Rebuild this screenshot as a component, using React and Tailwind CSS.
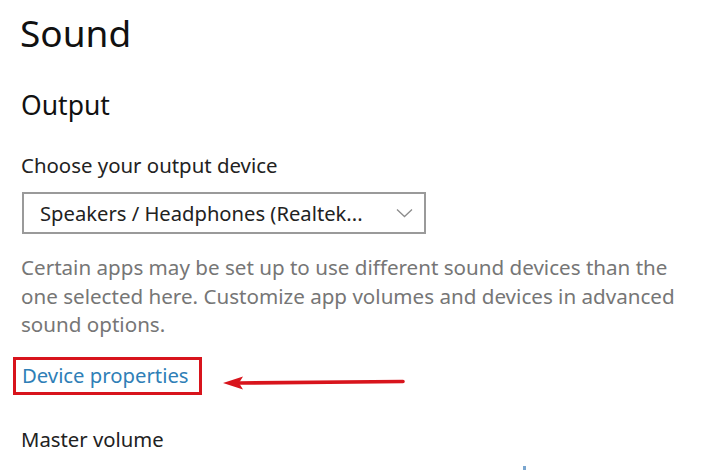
export default function App() {
  return (
    <div className="relative h-[472px] w-[720px] overflow-hidden bg-white pl-[21px] font-['Noto_Sans','Open_Sans',sans-serif] text-[#111]">
      <h1 className="-ml-[1px] pt-[8px] text-[37px] leading-[50px] font-normal">Sound</h1>
      <h2 className="mt-[29px] text-[26.5px] leading-[36px] font-normal">Output</h2>

      <div className="mt-[28px] text-[20.4px] leading-[28px] text-[#222]">Choose your output device</div>

      <button className="mt-[13px] ml-px flex h-[42px] w-[404px] items-center justify-between border-2 border-[#9a9a9a] pr-[11px] pl-[16px] text-[20.2px] leading-[28px] text-[#222]">
        <span>Speakers / Headphones (Realtek...</span>
        <svg width="17" height="10" viewBox="0 0 17 10" fill="none" stroke="#8c8c8c" strokeWidth="1.3">
          <path d="M1 1.5 L8.5 8.5 L16 1.5" />
        </svg>
      </button>

      <p className="mt-[19px] w-[672px] text-[20.6px] leading-[28.5px] text-[#767676]">
        Certain apps may be set up to use different sound devices than the one selected here.
        Customize app volumes and devices in advanced sound options.
      </p>

      <div className="mt-[18px] flex items-start">
        <div className="-ml-[8px] h-[38px] border-[3px] border-[#d8141c] pr-[10px] pl-[6px]">
          <span className="block pb-[2px] text-[20.3px] leading-[30px] text-[#2f7fb7]">Device properties</span>
        </div>
        <svg className="mt-[19px] ml-[20px]" width="184" height="14" viewBox="0 0 184 14">
          <path d="M18 7 L181 5.5" stroke="#d8141c" strokeWidth="3.6" strokeLinecap="round" />
          <path d="M1 7 L21 0.5 L17 7 L21 13.5 Z" fill="#d8141c" />
        </svg>
      </div>

      <div className="mt-[31px] text-[20.3px] leading-[26px] text-[#222]">Master volume</div>

      <div className="absolute top-[466px] left-[523px] h-[4px] w-[3px] bg-[#7aa6cf]" />
    </div>
  )
}
